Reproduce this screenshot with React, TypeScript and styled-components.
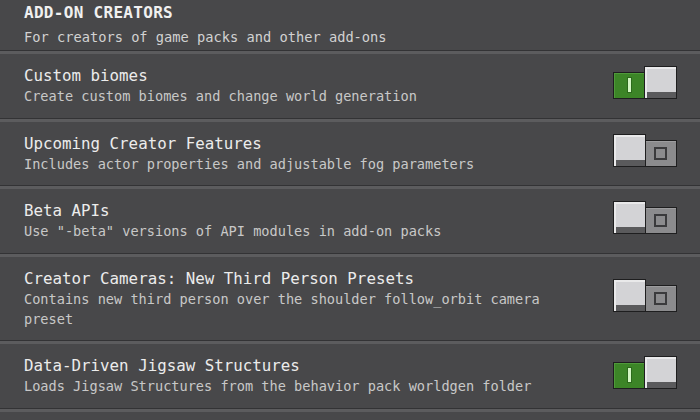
import React from "react";
import styled, { createGlobalStyle } from "styled-components";

const Global = createGlobalStyle`
  html, body { margin: 0; padding: 0; background: #48484a; }
  body { font-family: "DejaVu Sans Mono", "Liberation Mono", monospace; }
`;

const Page = styled.div`
  width: 700px;
  height: 420px;
  overflow: hidden;
  background: #48484a;
  display: flex;
  flex-direction: column;
`;

const Header = styled.div`
  height: 50px;
  box-sizing: border-box;
  padding: 3px 24px 3px 24px;
  display: flex;
  flex-direction: column;
  gap: 4px;
`;

const HeaderTitle = styled.div`
  font-size: 16px;
  font-weight: bold;
  line-height: 20px;
  color: #f0f0f0;
  letter-spacing: 0.3px;
`;

const HeaderSub = styled.div`
  font-size: 13.7px;
  line-height: 20px;
  color: #d2d2d2;
`;

const Divider = styled.div`
  height: 4px;
  flex: none;
  background: linear-gradient(to bottom, #333335 0, #333335 1.5px, #5c5c5e 1.5px, #5c5c5e 4px);
`;

const Row = styled.div`
  display: flex;
  align-items: center;
  padding: 11px 23px 11.5px 24px;
  gap: 16px;
`;

const TextCol = styled.div`
  flex: 1;
  min-width: 0;
  display: flex;
  flex-direction: column;
`;

const Title = styled.div`
  font-size: 15.8px;
  line-height: 21px;
  color: #ececec;
  white-space: nowrap;
`;

const Desc = styled.div`
  font-size: 13.6px;
  line-height: 20px;
  color: #c8c8c8;
  max-width: 520px;
`;

const ToggleBox = styled.div`
  position: relative;
  width: 64px;
  height: 33px;
  flex: none;
  margin-bottom: 6px;
`;

const Track = styled.div<{ $on: boolean }>`
  position: absolute;
  left: 0;
  right: 0;
  bottom: 0;
  height: 27px;
  box-sizing: border-box;
  border: 1px solid #1e1e1f;
  background: ${(p) => (p.$on ? "#3c8527" : "#8b8b8d")};
  box-shadow: inset 1px 1px 0 ${(p) => (p.$on ? "#4f9a3a" : "#9d9d9f")};
`;

const OnMark = styled.div`
  position: absolute;
  left: 14px;
  top: 5px;
  width: 3px;
  height: 14px;
  background: #d4f7c4;
  box-shadow: 0 0 0 1px #2c6a1c;
`;

const OffMark = styled.div`
  position: absolute;
  right: 9px;
  top: 6px;
  width: 9px;
  height: 9px;
  border: 2px solid #3a3a3c;
`;

const Knob = styled.div<{ $on: boolean }>`
  position: absolute;
  top: 0;
  ${(p) => (p.$on ? "right: 0;" : "left: 0;")}
  width: 33px;
  height: 33px;
  box-sizing: border-box;
  border: 1px solid #1e1e1f;
  background: linear-gradient(to bottom, #d3d3d6 0, #d3d3d6 calc(100% - 6px), #5a5a5c calc(100% - 6px));
  box-shadow: inset 2px 2px 0 #e9e9ea;
`;

function Toggle({ on }: { on: boolean }) {
  return (
    <ToggleBox>
      <Track $on={on}>{on ? <OnMark /> : <OffMark />}</Track>
      <Knob $on={on} />
    </ToggleBox>
  );
}

const items = [
  { t: "Custom biomes", d: "Create custom biomes and change world generation", on: true },
  { t: "Upcoming Creator Features", d: "Includes actor properties and adjustable fog parameters", on: false },
  { t: "Beta APIs", d: 'Use "-beta" versions of API modules in add-on packs', on: false },
  {
    t: "Creator Cameras: New Third Person Presets",
    d: "Contains new third person over the shoulder follow_orbit camera preset",
    on: false,
  },
  { t: "Data-Driven Jigsaw Structures", d: "Loads Jigsaw Structures from the behavior pack worldgen folder", on: true },
];

export default function App() {
  return (
    <Page>
      <Global />
      <Header>
        <HeaderTitle>ADD-ON CREATORS</HeaderTitle>
        <HeaderSub>For creators of game packs and other add-ons</HeaderSub>
      </Header>
      <Divider />
      {items.map((it) => (
        <React.Fragment key={it.t}>
          <Row>
            <TextCol>
              <Title>{it.t}</Title>
              <Desc>{it.d}</Desc>
            </TextCol>
            <Toggle on={it.on} />
          </Row>
          <Divider />
        </React.Fragment>
      ))}
    </Page>
  );
}
